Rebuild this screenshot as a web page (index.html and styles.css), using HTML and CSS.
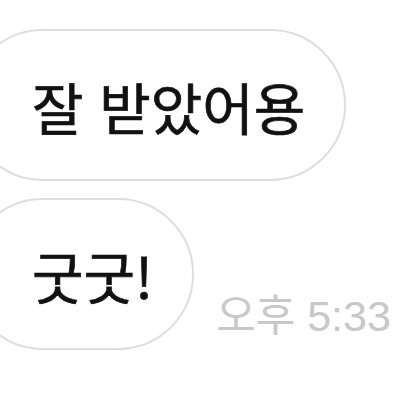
FILE: index.html
```html
<!DOCTYPE html>
<html lang="ko">
<head>
    <meta charset="UTF-8">
    <meta name="viewport" content="width=device-width, initial-scale=1.0">
    <title>채팅</title>
    <link rel="stylesheet" href="styles.css">
</head>
<body>
    <div class="chat">
        <div class="row">
            <div class="bubble">잘 받았어용</div>
        </div>
        <div class="row">
            <div class="bubble">굿굿!</div>
            <span class="time">오후 5:33</span>
        </div>
    </div>
</body>
</html>
```

FILE: styles.css
```css
body {
    font-family: "Liberation Sans", "Noto Sans CJK KR", sans-serif;
    background-color: #ffffff;
    color: #111111;
    margin: 0;
    padding: 0;
}
.chat {
    display: flex;
    flex-direction: column;
    gap: 17px;
    padding-top: 29px;
    margin-left: -33px;
}
.row {
    display: flex;
    align-items: flex-end;
    gap: 22px;
}
.bubble {
    box-sizing: border-box;
    height: 152px;
    display: flex;
    align-items: center;
    padding: 0 39px 0 63px;
    border: 2px solid #dedede;
    border-radius: 76px;
    font-family: "Noto Sans CJK KR", sans-serif;
    font-size: 56px;
    -webkit-text-stroke: 0.7px #111111;
    white-space: nowrap;
}
.time {
    font-size: 43px;
    color: #c8c8c8;
    padding-bottom: 7px;
    white-space: nowrap;
}
```
